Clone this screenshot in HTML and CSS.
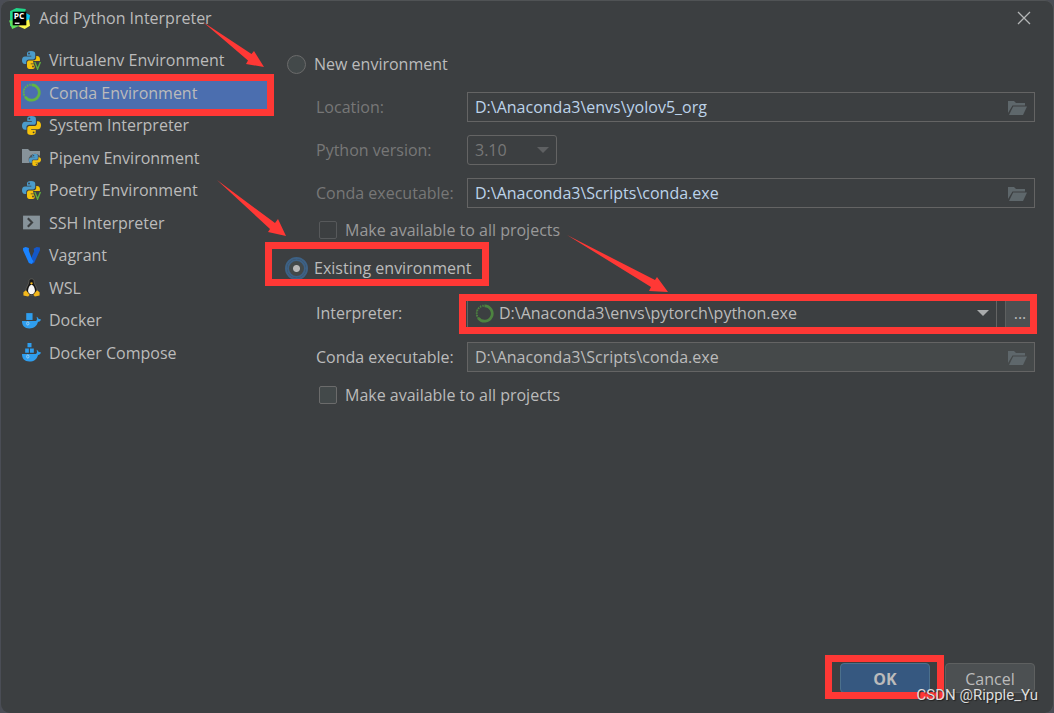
FILE: index.html
```html
<!DOCTYPE html>
<html lang="en">
<head>
<meta charset="utf-8">
<title>Add Python Interpreter</title>
<link rel="stylesheet" href="styles.css">
</head>
<body>
<svg class="defs" aria-hidden="true">
  <symbol id="python" viewBox="0 0 18 18">
    <path fill="#4b9bcb" d="M9 0C6 0 5 1 5 2.600V4.700H9.300V5.400H3C1 5.400 0 7 0 9.200S1 13 3 13H4.200V10.800C4.200 9.400 5.400 8.400 6.800 8.400H11C12.200 8.400 13.200 7.400 13.200 6.200V2.600C13.200 1 12 0 9 0Z"/>
    <path fill="#f5c20b" d="M9 18C12 18 13 17 13 15.400V13.300H8.700V12.600H15C17 12.600 18 11 18 8.800S17 5 15 5H14.200V7C14.200 8.600 12.900 9.500 11.500 9.500H7C5.800 9.500 5 10.500 5 11.800V15.400C5 17 6 18 9 18Z"/>
    <circle cx="7" cy="2.500" r=".9" fill="#3c3f41"/><circle cx="11" cy="15.500" r=".9" fill="#3c3f41"/>
  </symbol>
  <symbol id="python-v" viewBox="0 0 19 19">
    <use href="#python" x="0" y="0" width="18" height="18"/>
    <path fill="#3c3f41" d="M11 10H19V19H13.500Z"/>
    <path d="M12.800 11L15.600 18L18.400 11" fill="none" stroke="#5fae3d" stroke-width="1.400"/>
  </symbol>
  <symbol id="conda" viewBox="0 0 18 18">
    <path d="M9 1.700A7.300 7.300 0 1 1 3.200 13.400" fill="none" stroke="currentColor" stroke-width="2.600"/>
    <path d="M3.400 13.700A7.300 7.300 0 0 1 8.500 1.700" fill="none" stroke="currentColor" stroke-width="1.800" stroke-dasharray="1.300 1.100"/>
    <path d="M2 12A8 8 0 0 1 7.500 1" fill="none" stroke="currentColor" stroke-width=".8" stroke-dasharray="1 1.200"/>
  </symbol>
  <symbol id="pipenv" viewBox="0 0 19 19">
    <path fill="#87939a" d="M0 1H6L8 3H18V15H0Z"/>
    <circle cx="13" cy="12" r="6.300" fill="#3c3f41" opacity=".75"/>
    <use href="#python" x="7" y="6" width="12" height="12"/>
  </symbol>
  <symbol id="ssh" viewBox="0 0 18 18">
    <path fill="#87939a" d="M1 2.500H17V15.500H1Z"/>
    <path d="M5.500 5L9.500 9L5.500 13" fill="none" stroke="#3c3f41" stroke-width="2"/>
  </symbol>
  <symbol id="vagrant" viewBox="0 0 18 18">
    <path fill="#1457c8" d="M11 2.500L14 1L17 1.500V4L11.500 16L9 17L7.500 14L11.500 5Z"/>
    <path fill="#1a83ff" d="M1 2L3.500 1L6.500 2V4.500L9.500 12.500L11 14.500L9 17L6.500 16L1 4Z"/>
  </symbol>
  <symbol id="tux" viewBox="0 0 18 20">
    <path fill="#171717" stroke="#77736a" stroke-width=".6" d="M6.300 4C6.300 1.700 7.200 1 9 1S11.700 1.700 11.700 4C11.700 7 15 9.300 15 14C15 17 12 18 9 18S3 17 3 14C3 9.300 6.300 7 6.300 4Z"/>
    <path fill="#f6f6f6" d="M9 7C10.500 7 12.600 10 12.600 13.500C12.600 16 11 17 9 17S5.400 16 5.400 13.500C5.400 10 7.500 7 9 7Z"/>
    <path fill="#f3b81c" d="M7.400 5.200L9 4.400L10.600 5.200L9 7ZM3.200 13L7 17.500L5.500 19.500L.5 18.500V15ZM14.800 13L11 17.500L12.500 19.500L17.500 18.500V15Z"/>
  </symbol>
  <symbol id="hull" viewBox="0 0 18 18">
    <path fill="#2f9eee" d="M0 9.500H13C14.300 9.300 14.500 7.800 13.800 5.500C15 6 15.600 6.700 15.700 7.600C16.600 7.400 17.400 7.600 18 8C17.600 9.300 16.400 10.200 15.200 10.300C14 14.500 11.300 16.500 7 16.500C2.500 16.500 0 14 0 9.500Z"/>
    <ellipse cx="5.500" cy="11.800" rx="1.100" ry="1.500" fill="none" stroke="#bcdcf2" stroke-width=".7"/>
  </symbol>
  <symbol id="docker" viewBox="0 0 18 18">
    <use href="#hull" width="18" height="18"/><path fill="#2f9eee" d="M4 2H10V8.500H4Z"/>
  </symbol>
  <symbol id="compose" viewBox="0 0 18 18">
    <use href="#hull" y="1" width="18" height="18"/><path fill="#2f9eee" d="M5.200 0H9V4H5.200ZM3 5.200H6.500V9.200H3ZM7.500 5.200H11.200V9.200H7.500Z"/>
  </symbol>
  <symbol id="folder" viewBox="0 0 20 16">
    <path fill="#5e676b" d="M0 1H6L8 3H17V5.500H4.500L0 13Z"/><path fill="#5e676b" d="M5.200 6.500H19L15 15H1Z"/>
  </symbol>
</svg>

<main class="dialog">
  <header class="titlebar">
    <svg class="logo" viewBox="0 0 20 20" aria-hidden="true">
      <path fill="#21d789" d="M1 3L7 0L16 1L15 6L5 19L1 17Z"/>
      <path fill="#07c3f2" d="M15 4L20 7L19 13L15 14Z"/>
      <path fill="#fcf84a" d="M14 13L19 11L20 17L15 20L8 17Z"/>
      <path fill="#5fe05b" d="M0 12L4 12L10 17L3 20Z"/>
      <path d="M3.500 3.500H16.500V16.500H3.500Z"/>
      <path d="M5.500 14.500H10" stroke="#fff" stroke-width="1.200"/>
      <text class="logo-text" x="4.500" y="10.500">PC</text>
    </svg>
    <h1 class="title">Add Python Interpreter</h1>
    <button class="close" type="button" aria-label="Close">
      <svg viewBox="0 0 14 14" width="14" height="14"><path d="M1 1L13 13M13 1L1 13" stroke="#b4b6b7" stroke-width="1.300"/></svg>
    </button>
  </header>

  <div class="body">
    <nav class="sidebar">
      <ul class="kinds">
        <li class="kind"><svg class="icon"><use href="#python-v"/></svg><a href="#">Virtualenv Environment</a></li>
        <li class="kind selected"><svg class="icon"><use href="#conda"/></svg><a href="#">Conda Environment</a><span class="mark mark-kind"></span></li>
        <li class="kind"><svg class="icon"><use href="#python"/></svg><a href="#">System Interpreter</a></li>
        <li class="kind"><svg class="icon"><use href="#pipenv"/></svg><a href="#">Pipenv Environment</a></li>
        <li class="kind"><svg class="icon"><use href="#python-v"/></svg><a href="#">Poetry Environment</a></li>
        <li class="kind"><svg class="icon"><use href="#ssh"/></svg><a href="#">SSH Interpreter</a></li>
        <li class="kind"><svg class="icon"><use href="#vagrant"/></svg><a href="#">Vagrant</a></li>
        <li class="kind"><svg class="icon"><use href="#tux"/></svg><a href="#">WSL</a></li>
        <li class="kind"><svg class="icon"><use href="#docker"/></svg><a href="#">Docker</a></li>
        <li class="kind"><svg class="icon"><use href="#compose"/></svg><a href="#">Docker Compose</a></li>
      </ul>
    </nav>

    <form class="form">
      <div class="choice">
        <input class="radio" type="radio" name="mode" id="new">
        <label for="new">New environment</label>
      </div>
      <div class="row">
        <label class="dim" for="location">Location:</label>
        <div class="field"><input class="path" id="location" type="text" value="D:\Anaconda3\envs\yolov5_org"><button class="browse" type="button" aria-label="Browse"><svg width="20" height="16"><use href="#folder"/></svg></button></div>
      </div>
      <div class="row">
        <label class="dim" for="version">Python version:</label>
        <div class="combo version"><select id="version" disabled><option>3.10</option></select></div>
      </div>
      <div class="row">
        <label class="dim" for="conda-new">Conda executable:</label>
        <div class="field"><input class="path" id="conda-new" type="text" value="D:\Anaconda3\Scripts\conda.exe"><button class="browse" type="button" aria-label="Browse"><svg width="20" height="16"><use href="#folder"/></svg></button></div>
      </div>
      <div class="check disabled">
        <input class="box" type="checkbox" id="share-new" disabled>
        <label for="share-new">Make available to all projects</label>
      </div>

      <div class="choice existing">
        <input class="radio" type="radio" name="mode" id="existing" checked>
        <label for="existing">Existing environment</label>
        <span class="mark mark-existing"></span>
      </div>
      <div class="row">
        <label for="interpreter">Interpreter:</label>
        <div class="picker">
          <div class="combo interpreter"><svg class="icon"><use href="#conda"/></svg><select id="interpreter"><option>D:\Anaconda3\envs\pytorch\python.exe</option></select></div>
          <button class="more" type="button">...</button>
          <span class="mark mark-picker"></span>
        </div>
      </div>
      <div class="row last">
        <label for="conda-old">Conda executable:</label>
        <div class="field readonly"><input class="path" id="conda-old" type="text" value="D:\Anaconda3\Scripts\conda.exe" readonly><button class="browse" type="button" aria-label="Browse"><svg width="20" height="16"><use href="#folder"/></svg></button></div>
      </div>
      <div class="check">
        <input class="box" type="checkbox" id="share-old">
        <label for="share-old">Make available to all projects</label>
      </div>
    </form>
  </div>

  <footer class="actions">
    <div class="confirm"><button class="button primary" type="button">OK</button><span class="mark mark-ok"></span></div>
    <button class="button" type="button">Cancel</button>
  </footer>

  <svg class="arrows" width="700" height="320" aria-hidden="true">
    <path d="M203 22L251.500 54L254 51L264 67L246 64L248 60.500Z"/>
    <path d="M217 180L275 223L278 219L286 236L268 232L270 229Z"/>
    <path d="M567 235L655 280L657 277L668 292L649 291L651 287Z"/>
  </svg>
  <span class="watermark">CSDN @Ripple_Yu</span>
</main>
</body>
</html>
```
FILE: styles.css
```css
* { box-sizing: border-box; }

body {
  margin: 0;
  background: #4a4d55;
  color: #bbbbbb;
  font: 16px/20px "Open Sans", "Noto Sans", sans-serif;
}

button, input, select { font: inherit; color: inherit; margin: 0; }
a { color: inherit; text-decoration: none; }

.defs { position: absolute; width: 0; height: 0; }

.dialog {
  position: relative;
  display: flex;
  flex-direction: column;
  min-height: 100vh;
  margin-left: 1px;
  padding: 0 18px 20px 20px;
  background: #3c3f41;
  border: 1px solid #505355;
  border-left: 0;
  border-bottom: 0;
  border-radius: 9px;
}

.titlebar {
  display: flex;
  align-items: center;
  height: 34px;
  margin-left: -12px;
}
.logo { width: 21px; height: 21px; margin-right: 9px; }
.logo-text { font: bold 8px "Open Sans", sans-serif; fill: #fff; }
.title { margin: 0; font-size: 16px; font-weight: 400; }
.close {
  display: flex;
  margin-left: auto;
  padding: 4px;
  background: none;
  border: 0;
}

.body { display: flex; flex: 1; gap: 20px; }

.sidebar { flex: 0 0 246px; padding-top: 9px; }
.kinds {
  display: grid;
  grid-auto-rows: 1fr;
  height: 325px;
  margin: 0;
  padding: 0;
  list-style: none;
}
.kind {
  position: relative;
  display: flex;
  align-items: center;
  gap: 8px;
  padding-left: 1px;
}
.selected { background: #4b6eaf; }
.icon { flex: none; width: 19px; height: 19px; color: #5fae3d; }
.selected .icon { color: #62b543; }

.form { flex: 1; min-width: 0; padding-top: 14px; }
.choice, .check {
  position: relative;
  display: flex;
  align-items: center;
  width: max-content;
  height: 30px;
}
.choice { gap: 8px; }
.check { gap: 8px; margin: 8px 0 0 32px; }
.check.disabled { margin-top: 7px; color: #999999; }
.existing { margin: 8px 0 15px; }

.radio {
  appearance: none;
  width: 19px;
  height: 19px;
  background: #43494a;
  border: 1px solid #6b6b6b;
  border-radius: 50%;
}
.radio:checked {
  background: radial-gradient(circle, #b8b8b8 3px, #43494a 4px);
  border: 2px solid #3d6185;
  outline: 2px solid #3d6185;
  outline-offset: 0;
}
.box {
  appearance: none;
  width: 18px;
  height: 18px;
  background: #43494a;
  border: 1px solid #6b6b6b;
  border-radius: 2px;
}
.box:disabled { background: #3c3f41; border-color: #57595b; }

.row {
  display: grid;
  grid-template-columns: 151px minmax(0, 1fr);
  align-items: center;
  margin: 13px 0 0 29px;
}
.existing + .row { margin-top: 0; }
.last { margin-top: 14px; }
.dim { color: #777777; }

.field {
  display: flex;
  align-items: center;
  height: 30px;
  border: 1px solid #646464;
  color: #bcd3ea;
}
.readonly { background: #45494a; color: #bbbbbb; }
.path {
  flex: 1;
  min-width: 0;
  padding: 0 7px;
  background: none;
  border: 0;
  outline: 0;
}
.browse { display: flex; padding: 2px 6px 0 0; background: none; border: 0; }

.combo {
  position: relative;
  display: flex;
  align-items: center;
  height: 30px;
  border: 1px solid #646464;
}
.combo::after {
  content: "";
  position: absolute;
  right: 7px;
  border: 6px solid transparent;
  border-top-color: #a9abac;
  border-bottom: 0;
  pointer-events: none;
}
.combo select {
  appearance: none;
  flex: 1;
  padding: 0;
  background: none;
  border: 0;
  outline: 0;
}
.version { width: 90px; padding-left: 7px; border-radius: 3px; color: #777777; }
.version select { opacity: 1; }
.version::after { border-top-color: #5e6062; }
.interpreter { flex: 1; gap: 5px; padding-left: 7px; }
.interpreter .icon { color: #4d8340; }
.picker { position: relative; display: flex; gap: 8px; }
.more {
  width: 30px;
  padding: 0;
  background: #4c5052;
  border: 1px solid #5e6060;
}

.actions { display: flex; justify-content: flex-end; gap: 15px; }
.confirm { position: relative; display: flex; }
.button {
  width: 90px;
  height: 30px;
  padding: 2px 0 0;
  background: #4c5052;
  border: 1px solid #5e6060;
  border-radius: 4px;
}
.primary { background: #365880; border-color: #4c708c; font-weight: 700; }

.mark { position: absolute; border: 7px solid #ff3835; pointer-events: none; }
.mark-kind { inset: -3px -7px -7px; }
.mark-existing { inset: -11px -18px -3px -22px; }
.mark-picker { inset: -4px -2px -6px -8px; }
.mark-ok { inset: -8px -14px -6px -15px; }

.arrows {
  position: absolute;
  top: -1px;
  left: -1px;
  fill: #ff3835;
  pointer-events: none;
}
.watermark {
  position: absolute;
  right: 15px;
  bottom: 8px;
  color: #dedede;
  font: 15px/20px "Roboto", sans-serif;
  text-shadow: 1px 1px 1px #222;
}
```
